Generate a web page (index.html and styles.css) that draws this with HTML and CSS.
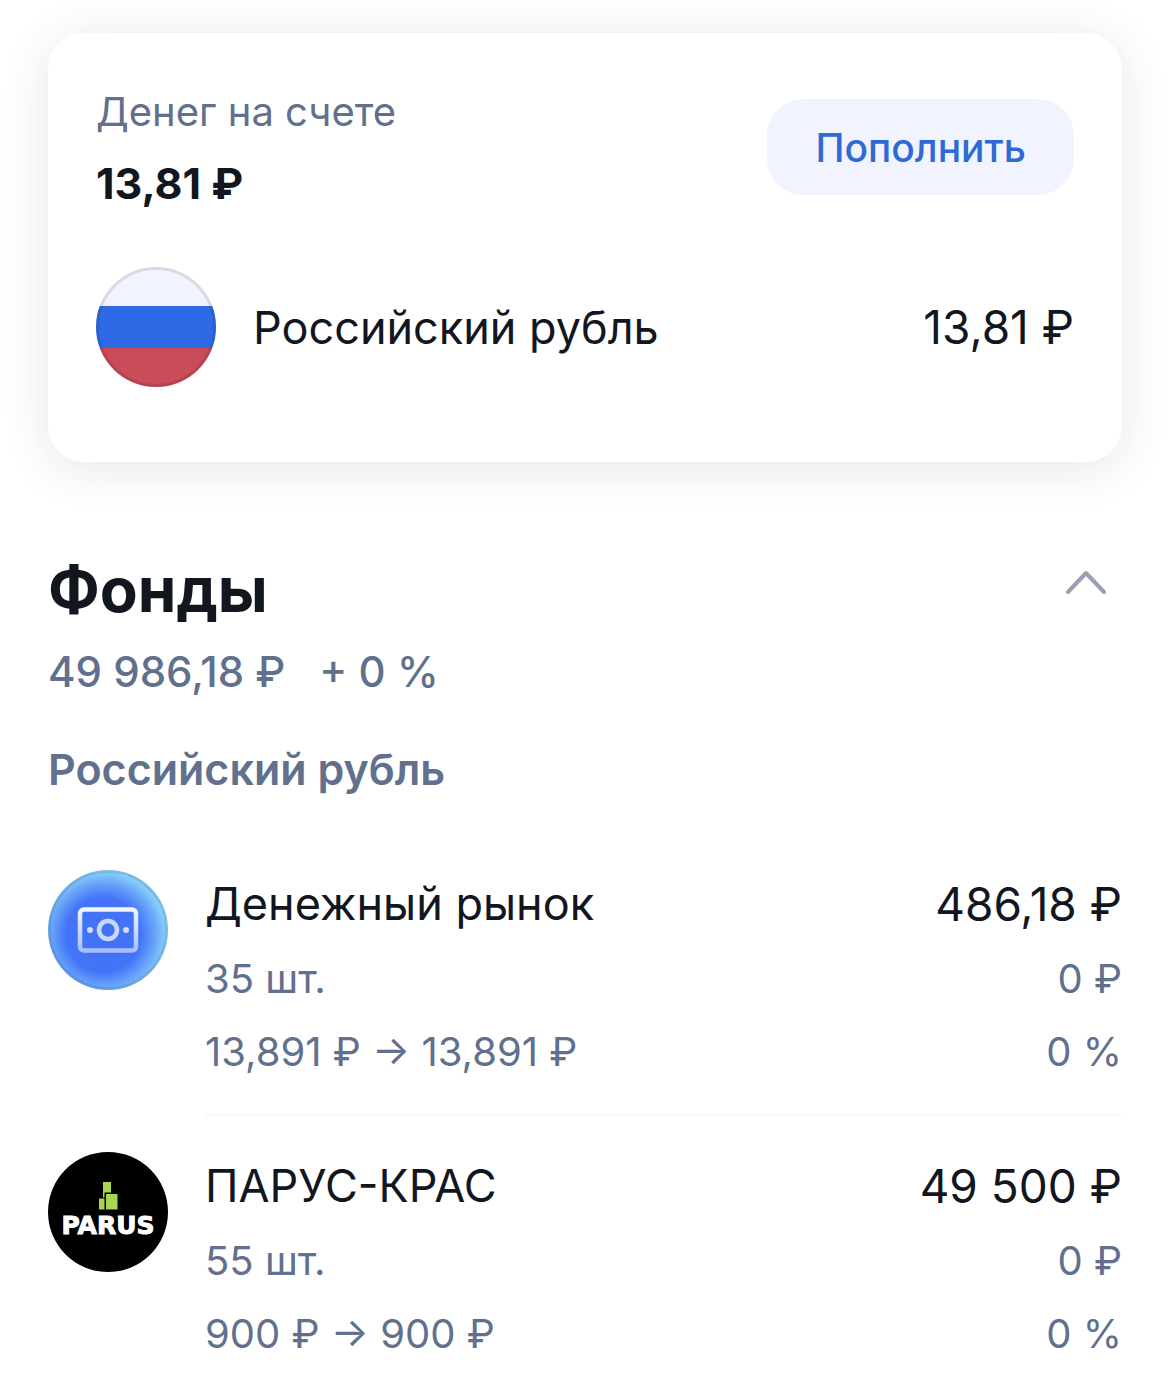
FILE: index.html
```html
<!DOCTYPE html>
<html lang="ru">
<head>
  <meta charset="UTF-8" />
  <meta name="viewport" content="width=device-width, initial-scale=1" />
  <title>Портфель</title>
  <link rel="stylesheet" href="styles.css">
</head>
<body>
  <main class="container">
    <section class="card">
      <div class="card-header">
        <div>
          <h2 class="card-label">Денег на счете</h2>
          <p class="card-total">13,81 ₽</p>
        </div>
        <button type="button" class="topup-btn">Пополнить</button>
      </div>
      <div class="currency">
        <svg class="logo" viewBox="0 0 120 120" aria-hidden="true">
          <defs>
            <clipPath id="flagClip"><circle cx="60" cy="60" r="60" /></clipPath>
          </defs>
          <g clip-path="url(#flagClip)">
            <rect width="120" height="120" fill="#f1f4fe" />
            <rect y="39" width="120" height="43" fill="#2f6ae6" />
            <rect y="81" width="120" height="39" fill="#c94c58" />
          </g>
          <circle cx="60" cy="60" r="58.5" fill="none" stroke="#000" stroke-opacity="0.1" stroke-width="3" />
        </svg>
        <span>Российский рубль</span>
        <span class="currency-value">13,81 ₽</span>
      </div>
    </section>

    <section class="funds">
      <div class="funds-header">
        <h1>Фонды</h1>
        <button type="button" class="toggle-btn" aria-label="Свернуть">
          <svg width="44" height="28" viewBox="0 0 44 28" aria-hidden="true">
            <path d="M4 24 L22 5 L40 24" fill="none" stroke="#9a9fb3" stroke-width="4" stroke-linecap="round" stroke-linejoin="round" />
          </svg>
        </button>
      </div>
      <p class="funds-total"><span>49 986,18 ₽</span><span>+ 0 %</span></p>
      <h2 class="group-title">Российский рубль</h2>

      <ul class="fund-list">
        <li class="fund">
          <svg class="logo" viewBox="0 0 120 120" aria-hidden="true">
            <defs>
              <radialGradient id="moneyFill" cx="0.46" cy="0.54" r="0.56">
                <stop offset="0" stop-color="#4273f6" />
                <stop offset="0.55" stop-color="#4273f8" />
                <stop offset="0.78" stop-color="#6aa6f9" />
                <stop offset="0.95" stop-color="#8ad2fd" />
              </radialGradient>
              <linearGradient id="noteStroke" gradientUnits="userSpaceOnUse" x1="0" y1="38" x2="0" y2="83">
                <stop offset="0" stop-color="#f4f7ff" />
                <stop offset="1" stop-color="#a3bdfb" />
              </linearGradient>
            </defs>
            <circle cx="60" cy="60" r="60" fill="url(#moneyFill)" />
            <circle cx="60" cy="60" r="58.5" fill="none" stroke="#000" stroke-opacity="0.1" stroke-width="3" />
            <rect x="32" y="39.5" width="56" height="41" rx="4" fill="none" stroke="url(#noteStroke)" stroke-width="4.5" />
            <circle cx="60" cy="60" r="9" fill="none" stroke="#c9d8fd" stroke-width="4.5" />
            <circle cx="42" cy="60" r="3" fill="#d3dffd" />
            <circle cx="78" cy="60" r="3" fill="#d3dffd" />
          </svg>
          <div class="fund-body">
            <div class="fund-row fund-main"><span>Денежный рынок</span><span class="fund-value">486,18 ₽</span></div>
            <div class="fund-row"><span>35 шт.</span><span>0 ₽</span></div>
            <div class="fund-row"><span>13,891 ₽ → 13,891 ₽</span><span>0 %</span></div>
          </div>
        </li>
        <li class="fund">
          <svg class="logo" viewBox="0 0 120 120" aria-hidden="true">
            <circle cx="60" cy="60" r="60" fill="#000" />
            <g fill="#a9d650">
              <path d="M55 30h8v10.500h-6.500v5h-1.500z" />
              <rect x="58" y="42" width="11.500" height="15.500" />
              <rect x="51" y="46.500" width="5.500" height="11" />
            </g>
            <text class="parus-text" x="60" y="82" text-anchor="middle">PARUS</text>
          </svg>
          <div class="fund-body">
            <div class="fund-row fund-main"><span>ПАРУС-КРАС</span><span class="fund-value">49 500 ₽</span></div>
            <div class="fund-row"><span>55 шт.</span><span>0 ₽</span></div>
            <div class="fund-row"><span>900 ₽ → 900 ₽</span><span>0 %</span></div>
          </div>
        </li>
      </ul>
    </section>
  </main>
</body>
</html>
```

FILE: styles.css
```css
:root {
  --text-primary: #12161f;
  --text-secondary: #61708c;
  --accent: #2f69d4;
}

* {
  margin: 0;
  padding: 0;
  box-sizing: border-box;
}

body {
  font-family: Inter, "Noto Sans", sans-serif;
  background-color: #fff;
  color: var(--text-primary);
}

.container {
  padding: 33px 48px 24px;
}

.card {
  padding: 43px 48px 75px;
  border-radius: 36px;
  background-color: #fff;
  box-shadow: 0 6px 48px rgba(30, 50, 80, 0.12);
}

.card-header {
  display: flex;
  justify-content: space-between;
  align-items: center;
  margin-bottom: 49px;
}

.card-label {
  font-size: 40px;
  font-weight: 400;
  line-height: 72px;
  color: var(--text-secondary);
}

.card-total {
  font-size: 43px;
  font-weight: 700;
  line-height: 70px;
}

.topup-btn {
  height: 96px;
  padding: 0 48px;
  border: none;
  border-radius: 36px;
  background-color: #f1f4fe;
  color: var(--accent);
  font: 500 39px Inter, "Noto Sans", sans-serif;
  cursor: pointer;
}

.logo {
  flex: none;
  width: 120px;
  height: 120px;
}

.currency {
  display: flex;
  align-items: center;
  gap: 37px;
  font-size: 45px;
}

.currency-value,
.fund-value {
  font-size: 46px;
}

.currency-value {
  margin-left: auto;
}

.funds {
  margin-top: 84px;
}

.funds-header {
  display: flex;
  justify-content: space-between;
  align-items: flex-start;
}

.funds-header h1 {
  font-size: 62px;
  font-weight: 700;
  line-height: 88px;
}

.toggle-btn {
  padding: 22px 14px;
  border: none;
  background: none;
  cursor: pointer;
}

.funds-total {
  display: flex;
  gap: 34px;
  margin-top: 2px;
  font-size: 42px;
  font-weight: 500;
  line-height: 72px;
  color: var(--text-secondary);
}

.group-title {
  margin-top: 25px;
  font-size: 43px;
  font-weight: 600;
  line-height: 72px;
  color: var(--text-secondary);
}

.fund-list {
  list-style: none;
  margin-top: 29px;
}

.fund {
  display: flex;
  gap: 37px;
  padding-top: 36px;
}

.fund-body {
  flex: 1;
  padding-bottom: 26px;
}

.fund:not(:last-child) .fund-body {
  border-bottom: 2px solid #f7f7f9;
}

.fund-row {
  display: flex;
  justify-content: space-between;
  font-size: 40px;
  line-height: 73px;
  color: var(--text-secondary);
}

.fund-main {
  margin-bottom: 4px;
  font-size: 45px;
  line-height: 68px;
  color: var(--text-primary);
}

.parus-text {
  font: 700 25px "DejaVu Sans", sans-serif;
  fill: #fff;
  stroke: #fff;
  stroke-width: 1px;
}
```
